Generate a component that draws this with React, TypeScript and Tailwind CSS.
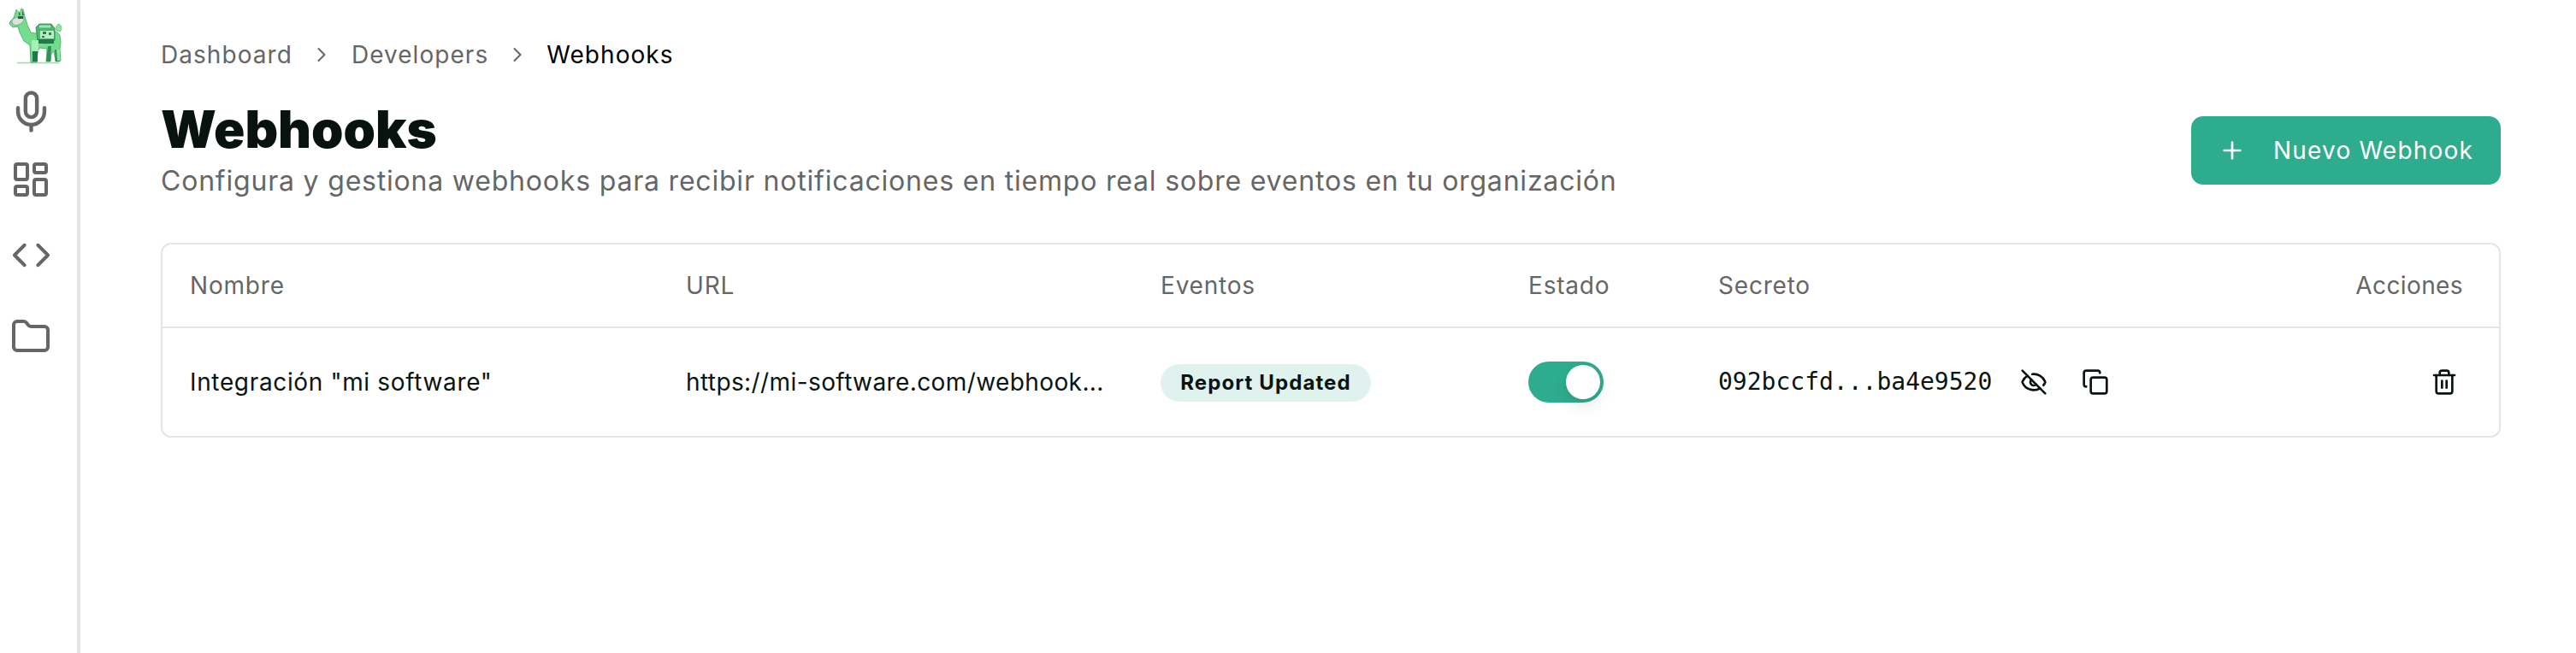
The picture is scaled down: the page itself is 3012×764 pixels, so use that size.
import { ChevronRight, Plus, Mic, LayoutDashboard, Code, Folder, EyeOff, Copy, Trash2 } from "lucide-react";

const font = "font-['Inter','Noto_Sans',sans-serif]";

function Llama() {
  return (
    <svg width="76" height="78" viewBox="0 0 76 78" className="block">
      <path d="M20 73.5h50" stroke="#86e79a" strokeWidth="1.6" />
      <path d="M19 11l4 5 2-6 2 1 2 8 3 10 4 9 6 1 6-3h14l5 2 3 3 1 9-1 7 1 14-6 1-2-12-3 3-1 9h-5l1-15-9-1-2 6-1 11h-7l-1-20-7-5-5-10-2-7-6 1-4-4 1-3 4-4z" fill="#72dd8d" stroke="#4aa56c" strokeWidth="0.8" />
      <path d="M14 23l6-3 7-1 1 5-4 4-6 2-4-3z" fill="#d9e3dc" stroke="#5f8a70" strokeWidth="0.6" />
      <path d="M21 19h6v3h-6z" fill="#2f5a40" />
      <path d="M22 13l2 5h-2zM26 11l2 7h-2z" fill="#2f6f48" />
      <path d="M42 32l4-4h14l4 5v14l-10 4-10-3z" fill="#4fb573" stroke="#2a7d4c" strokeWidth="0.8" />
      <path d="M46 29.5h13v3H46z" fill="#9ce8b0" />
      <path d="M47 36h16v9H47z" fill="#b5efc4" />
      <path d="M50 37h4v3h-4zM57 38h3v3h-3zM49 42h3v2h-3z" fill="#2d7f4d" />
      <path d="M44 46h19v5H44z" fill="#1f7a45" />
      <path d="M66 36c-2-3 0-7 3-8 3 2 4 6 1 9z" fill="#86e79a" stroke="#4aa56c" strokeWidth="0.6" />
      <path d="M37 47h8v13h-8z" fill="#a8eebb" />
      <path d="M38 60h6v12h-6z" fill="#1f7a45" />
      <path d="M56 54h4l-1 18h-5zM64 58h6v14h-5z" fill="#2f8f55" />
      <path d="M66 58h4v13h-3z" fill="#8be49f" />
    </svg>
  );
}

export default function App() {
  return (
    <div className={`${font} flex h-[764px] w-[3012px] bg-white text-[#0a1410]`}>
      <aside className="h-full w-[94px] shrink-0 border-r-4 border-[#e5e5e5]">
        <Llama />
        <div className="flex w-[72px] flex-col items-center text-[#666666]">
          <Mic size={53} strokeWidth={2} className="mt-[26px]" />
          <LayoutDashboard size={48} strokeWidth={2} className="mt-[29px]" />
          <Code size={47} strokeWidth={2} className="mt-[41px]" />
          <Folder size={48} strokeWidth={2} className="mt-[48px]" />
        </div>
      </aside>
      <main className="flex-1 pl-[94px] pr-[88px]">
        <nav className="mt-[46px] flex h-[36px] items-center text-[28px] tracking-[1.05px] text-[#666666]">
          <span>Dashboard</span>
          <ChevronRight size={28} strokeWidth={1.7} className="ml-[20px] mr-[21px]" />
          <span>Developers</span>
          <ChevronRight size={28} strokeWidth={1.7} className="mx-[20px]" />
          <span className="text-black">Webhooks</span>
        </nav>
        <div className="mt-[36px] flex items-start justify-between">
          <div>
            <h1 className="text-[60px] font-black leading-[66px] text-[#08120e]">Webhooks</h1>
            <p className="mt-[7px] text-[32px] leading-[42px] tracking-[0.8px] text-[#666666]">Configura y gestiona webhooks para recibir notificaciones en tiempo real sobre eventos en tu organización</p>
          </div>
          <button className="mt-[18px] flex h-[80px] w-[362px] items-center rounded-[14px] bg-[#2eac8e] pl-[32px] text-[28px] tracking-[1.2px] text-white">
            <Plus size={32} strokeWidth={2} />
            <span className="ml-[32px]">Nuevo Webhook</span>
          </button>
        </div>
        <section className="mt-[51px] rounded-[12px] border-2 border-[#e5e5e5]">
          <div className="flex h-[98px] items-center border-b-2 border-[#e5e5e5] text-[28px] tracking-[0.8px] text-[#666666]">
            <div className="w-[612px] pl-[32px]">Nombre</div>
            <div className="w-[555px] pl-[0px]">URL</div>
            <div className="w-[430px]">Eventos</div>
            <div className="w-[222px]">Estado</div>
            <div className="flex-1">Secreto</div>
            <div className="pr-[42px] tracking-[0.4px]">Acciones</div>
          </div>
          <div className="flex h-[126px] items-center text-[28px] tracking-[0.65px] text-[#0a1410]">
            <div className="w-[612px] pl-[32px]">Integración "mi software"</div>
            <div className="w-[555px] tracking-[0.4px]">https://mi-software.com/webhook...</div>
            <div className="w-[430px]">
              <span className="inline-flex h-[44px] w-[246px] items-center justify-center rounded-full bg-[#dff2ed] text-[24px] font-bold tracking-[1.1px]">Report Updated</span>
            </div>
            <div className="w-[222px]">
              <div className="flex h-[48px] w-[88px] items-center justify-end rounded-full bg-[#2eac8e] pr-[4px]">
                <div className="h-[40px] w-[40px] rounded-full bg-white shadow-[0_8px_18px_rgba(0,0,0,0.09)]" />
              </div>
            </div>
            <div className="flex flex-1 items-center">
              <span className="font-['DejaVu_Sans_Mono',monospace] text-[28px] tracking-normal">092bccfd...ba4e9520</span>
              <EyeOff size={32} className="ml-[33px]" />
              <Copy size={32} className="ml-[40px]" />
            </div>
            <div className="pr-[48px]"><Trash2 size={32} /></div>
          </div>
        </section>
      </main>
    </div>
  );
}
